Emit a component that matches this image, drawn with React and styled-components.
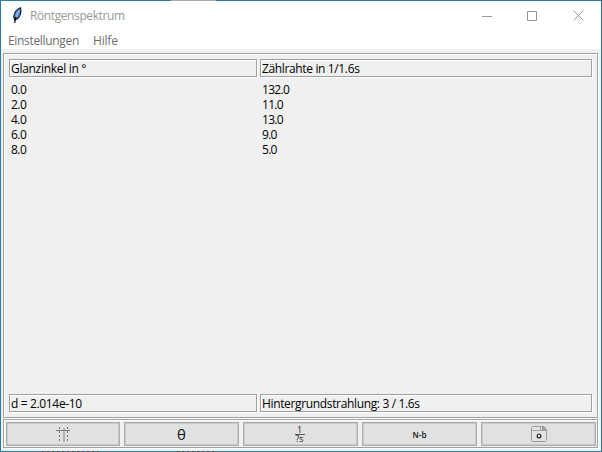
import React from "react";
import styled, { createGlobalStyle } from "styled-components";

const Global = createGlobalStyle`
  *{box-sizing:border-box}
  html,body{margin:0;padding:0;overflow:hidden}
  body{font:12px/15px "Open Sans","Noto Sans",sans-serif;color:#000}
  svg{display:block}
`;
const Frame = styled.div`
  width:602px;height:452px;padding:1px;
  background:
    linear-gradient(#aaa,#aaa) 171px 0/45px 1px no-repeat,
    repeating-linear-gradient(90deg,#3b4a4a 0 2px,#2a7aa3 2px 4px,#6f7a70 4px 5px) 42px 451px/58px 1px no-repeat,
    repeating-linear-gradient(90deg,#3b4a4a 0 2px,#2a7aa3 2px 4px,#6f7a70 4px 5px) 177px 451px/38px 1px no-repeat,
    #2a7aa3;
`;
const Window = styled.div`
  width:600px;height:450px;background:#f0f0f0;
  display:flex;flex-direction:column;
`;
const TitleBar = styled.header`
  height:29px;flex:none;background:#fff;display:flex;align-items:center;padding-left:11px;
`;
const Label = styled.span`
  letter-spacing:${p => p.$track || 0}px;white-space:pre;
`;
const Title = styled(Label)`
  color:#999;margin-left:6px;flex:1;
`;
const WindowControl = styled.span`
  width:${p => p.$width}px;height:29px;display:flex;align-items:center;justify-content:center;
`;
const MenuBar = styled.nav`
  height:19px;flex:none;background:#fff;display:flex;gap:14px;padding:3px 0 0 7px;color:#6d6d6d;
`;
const Groove = styled.div`
  border:1px solid #a0a0a0;
  box-shadow:1px 1px 0 #fff,inset 1px 1px 0 #fff;
`;
const Content = styled(Groove)`
  margin:4px 3px 0 2px;height:365px;flex:none;padding:5px;
  display:flex;flex-direction:column;
`;
const Columns = styled.div`
  display:grid;grid-template-columns:248px 332px;column-gap:3px;
`;
const Cell = styled(Groove)`
  height:18px;padding-left:1px;line-height:17px;
`;
const Values = styled.div`
  padding:5px 0 0 2px;display:flex;flex-direction:column;
`;
const Spacer = styled.div`flex:1;`;
const Toolbar = styled(Groove)`
  margin:1px 3px 0 2px;height:29px;flex:none;padding:2px 1px 2px 2px;
  display:grid;grid-template-columns:114px 115px 115px 115px 115px;column-gap:4px;
`;
const Button = styled.button`
  border:1px solid #adadad;background:#e1e1e1;padding:${p => p.$drop || 0}px 0 0;margin:0;height:24px;
  box-shadow:inset 0 0 0 .5px #b4b4b4;display:flex;align-items:center;justify-content:center;
  font:${p => p.$weight || 400} ${p => p.$size || 12}px/1 "Open Sans","Noto Sans",sans-serif;color:#111;
`;
const Fraction = styled.span`
  display:flex;flex-direction:column;align-items:center;font-size:9px;line-height:8px;color:#222;
  margin-right:2px;font-weight:500;
`;
const Bar = styled.span`
  width:10px;height:1px;background:#555;
`;

const Feather = () => (
  <svg width="12" height="17" viewBox="0 0 12 17">
    <path d="M8.500 .8C5.500 2 2.500 5.500 1.800 9.500L2.500 12.800C6 12.300 8.300 9 8.900 4.500Z" fill="#5a94dc" stroke="#10151f" strokeWidth="1.200" />
    <path d="M7 3.500L4.200 9.500" stroke="#8fbcf2" strokeWidth="1.300" />
    <path d="M4 10L3.300 12L2.700 16" fill="none" stroke="#000" strokeWidth="1.200" />
  </svg>
);
const GridIcon = () => (
  <svg width="15" height="15" viewBox="0 0 15 15" shapeRendering="crispEdges">
    <path d="M3.500 0V15M11.500 0V15" stroke="#777" strokeDasharray="2 2" />
    <path d="M7.500 1V15" stroke="#b0b0b0" strokeWidth="2" />
    <path d="M0 3.500H14" stroke="#7c7c7c" />
  </svg>
);
const SaveIcon = () => (
  <svg width="16" height="16" viewBox="0 0 16 16">
    <path d="M1.500 .5H13L15.500 3.500V14.500L14.500 15.500H1.500L.5 14.500V1.500Z" fill="#e4e4e4" stroke="#9a9a9a" />
    <path d="M1 4.500H15M9.500 1V4" stroke="#a0a0a0" fill="none" />
    <path d="M11 1H13L15 4H11Z" fill="#999" />
    <ellipse cx="8" cy="10" rx="1.800" ry="2" fill="none" stroke="#222" strokeWidth="1.200" />
  </svg>
);

const angles = ["0.0", "2.0", "4.0", "6.0", "8.0"];
const rates = ["132.0", "11.0", "13.0", "9.0", "5.0"];

export default function App() {
  return (
    <Frame>
      <Global />
      <Window>
        <TitleBar>
          <Feather />
          <Title $track={-0.4}>Röntgenspektrum</Title>
          <WindowControl $width={42}><svg width="10" height="10"><path d="M0 5.500H10" stroke="#999" /></svg></WindowControl>
          <WindowControl $width={48}><svg width="10" height="10"><path d="M.5 .5H9.500V9.500H.5Z" fill="none" stroke="#999" /></svg></WindowControl>
          <WindowControl $width={45}><svg width="11" height="11"><path d="M.5 .5L10.500 10.500M10.500 .5L.5 10.500" stroke="#999" /></svg></WindowControl>
        </TitleBar>
        <MenuBar>
          <Label $track={-0.32}>Einstellungen</Label>
          <Label $track={-0.2}>Hilfe</Label>
        </MenuBar>
        <Content>
          <Columns>
            <Cell><Label $track={-0.3}>Glanzinkel in °</Label></Cell>
            <Cell><Label $track={-0.36}>Zählrahte in 1/1.6s</Label></Cell>
          </Columns>
          <Columns>
            <Values>{angles.map(v => <Label $track={-0.5} key={v}>{v}</Label>)}</Values>
            <Values>{rates.map(v => <Label $track={-0.7} key={v}>{v}</Label>)}</Values>
          </Columns>
          <Spacer />
          <Columns>
            <Cell><Label $track={-0.35}>d = 2.014e-10</Label></Cell>
            <Cell><Label $track={-0.35}>Hintergrundstrahlung: 3 / 1.6s</Label></Cell>
          </Columns>
        </Content>
        <Toolbar>
          <Button><GridIcon /></Button>
          <Button $size={15} $weight={500}>θ</Button>
          <Button><Fraction>1<Bar />?s</Fraction></Button>
          <Button $size={8} $weight={600} $drop={2}>N-b</Button>
          <Button><SaveIcon /></Button>
        </Toolbar>
      </Window>
    </Frame>
  );
}
